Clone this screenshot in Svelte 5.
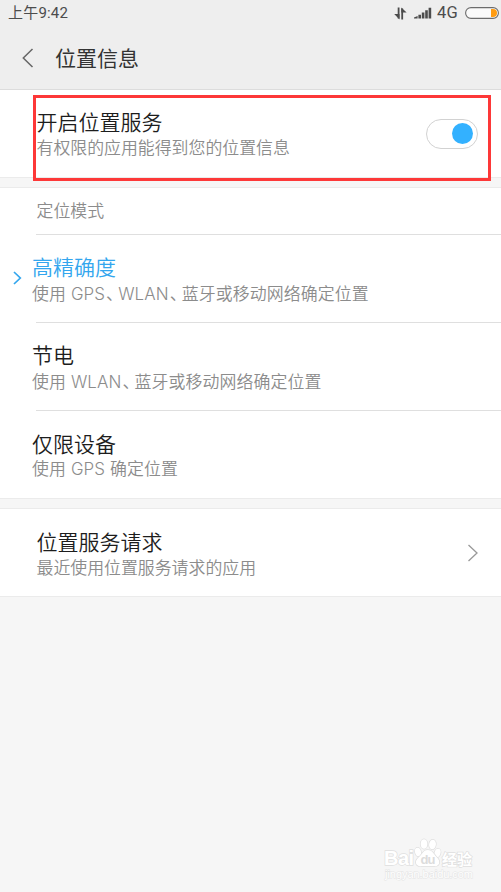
<script lang="ts">
  interface Mode {
    id: string;
    title: string;
    description: string[];
  }

  const modes: Mode[] = [
    { id: 'high', title: '高精确度', description: ['使用 GPS', 'WLAN', '蓝牙或移动网络确定位置'] },
    { id: 'saving', title: '节电', description: ['使用 WLAN', '蓝牙或移动网络确定位置'] },
    { id: 'device', title: '仅限设备', description: ['使用 GPS 确定位置'] }
  ];

  let enabled = $state(true);
  let selected = $state('high');
</script>

<div class="screen">
  <header class="header">
    <div class="status-bar">
      <span class="time">上午9:42</span>
      <div class="status-icons">
        <svg class="data-icon" width="14" height="13" viewBox="0 0 14 13">
          <path d="M4.6 0.5V11.5M8.2 12.5V1.5" fill="none" stroke="#4c4c4c" stroke-width="1.8" />
          <path d="M5.5 12.5V7H0.2zM7.3 0.5V5.5H12.6z" fill="#4c4c4c" />
        </svg>
        <svg class="signal-icon" width="18" height="12" viewBox="0 0 18 12">
          <path d="M0 11.5V10.5L3.6 9V11.5zM4.4 7.8H7V11.5H4.4zM7.8 5.6H10.4V11.5H7.8zM11.2 3.2H13.8V11.5H11.2zM14.6 0.8H17.2V11.5H14.6z" fill="#4c4c4c" />
        </svg>
        <span class="network">4G</span>
        <svg class="battery-icon" width="34" height="12" viewBox="0 0 34 12">
          <rect x="0.6" y="0.6" width="32.8" height="10.8" rx="5.4" fill="#fafafa" stroke="#6c6c6c" stroke-width="1.1" />
          <path d="M26 2H28A4 4 0 0 1 28 10H26z" fill="#ff9c12" />
        </svg>
      </div>
    </div>
    <div class="title-bar">
      <button type="button" class="back" aria-label="返回">
        <svg width="12" height="20" viewBox="0 0 12 20">
          <path d="M10.5 1L1.3 10L10.5 19" fill="none" stroke="#666" stroke-width="1.5" />
        </svg>
      </button>
      <h1>位置信息</h1>
    </div>
  </header>

  <!-- Location switch -->
  <section class="card">
    <div class="row service">
      <div class="texts">
        <div class="title">开启位置服务</div>
        <div class="description">有权限的应用能得到您的位置信息</div>
      </div>
      <button
        type="button"
        class="switch"
        class:on={enabled}
        role="switch"
        aria-checked={enabled}
        aria-label="开启位置服务"
        onclick={() => (enabled = !enabled)}
      >
        <span class="knob"></span>
      </button>
    </div>
    <div class="highlight"></div>
  </section>

  <!-- Location mode -->
  <section class="card">
    <div class="group-label">定位模式</div>
    {#each modes as mode (mode.id)}
      <button
        type="button"
        class="row mode"
        class:selected={selected === mode.id}
        onclick={() => (selected = mode.id)}
      >
        <span class="marker">
          {#if selected === mode.id}
            <svg width="9" height="14" viewBox="0 0 9 14">
              <path d="M1 1L7.3 7L1 13" fill="none" stroke="#33a6ee" stroke-width="1.7" />
            </svg>
          {/if}
        </span>
        <span class="texts">
          <span class="title">{mode.title}</span>
          <span class="description">
            {#each mode.description as part, i}{#if i > 0}<span class="comma">、</span>{/if}{part}{/each}
          </span>
        </span>
      </button>
    {/each}
  </section>

  <section class="card">
    <div class="row requests">
      <div class="texts">
        <div class="title">位置服务请求</div>
        <div class="description">最近使用位置服务请求的应用</div>
      </div>
      <svg width="12" height="18" viewBox="0 0 12 18">
        <path d="M1.5 1L10 9L1.5 17" fill="none" stroke="#999" stroke-width="1.3" />
      </svg>
    </div>
  </section>

  <svg class="watermark" width="94" height="46" viewBox="0 0 94 46">
    <g fill="#fff" stroke="#dfdfdf" stroke-width="1.4" paint-order="stroke">
      <text class="brand" x="1" y="28" textLength="30">Bai</text>
      <ellipse cx="35" cy="15" rx="3" ry="4.3" transform="rotate(-12 35 15)" />
      <ellipse cx="41" cy="7" rx="3.4" ry="4.8" />
      <ellipse cx="49.5" cy="7.5" rx="3.4" ry="4.8" transform="rotate(8 49.5 7.5)" />
      <ellipse cx="54.5" cy="16" rx="3" ry="4.3" transform="rotate(16 54.5 16)" />
      <path d="M44.5 13C50 13 51 18 54.5 21C58 25 56 30 51 29H39C33 30 31 25 35 21C39 18 40 13 44.5 13z" />
      <text class="cjk" x="59" y="28" textLength="30">经验</text>
    </g>
    <text class="du" x="37.5" y="27" textLength="15">du</text>
    <text class="url" x="2" y="41" textLength="88">jingyan.baidu.com</text>
  </svg>
</div>

<style>
  :global(body) {
    background: #f6f6f6;
  }

  .screen {
    position: relative;
    height: 892px;
    overflow: hidden;
    background: #f6f6f6;
    font-family: Roboto, 'Noto Sans CJK SC', sans-serif;
    font-weight: 350;
    color: #1d1d1d;
  }

  button {
    padding: 0;
    border: none;
    background: none;
    font: inherit;
    color: inherit;
    text-align: left;
    cursor: pointer;
  }

  svg {
    display: block;
    flex-shrink: 0;
  }

  /* Header */
  .header {
    box-sizing: border-box;
    height: 90px;
    background: #eee;
    border-bottom: 1px solid #dcdcdc;
  }

  .status-bar {
    display: flex;
    justify-content: space-between;
    height: 26px;
    padding: 0 2px 0 8px;
    font-size: 15px;
    line-height: 26px;
    font-weight: 400;
    color: #4c4c4c;
  }

  .time {
    letter-spacing: 0.2px;
  }

  .status-icons {
    display: flex;
    align-items: center;
  }

  .signal-icon {
    margin-left: 6px;
  }

  .network {
    margin: 0 7px 0 5px;
    font-size: 16.5px;
    letter-spacing: 0.3px;
  }

  .title-bar {
    display: flex;
    align-items: center;
    height: 63px;
    padding-left: 22px;
  }

  h1 {
    margin: 2px 0 0 21px;
    font-size: 21px;
    line-height: 30px;
    font-weight: 400;
    color: #333;
  }

  /* Cards */
  .card {
    position: relative;
    background: #fff;
    border-bottom: 1px solid #ebebeb;
  }

  .card + .card {
    margin-top: 9px;
    border-top: 1px solid #ebebeb;
  }

  .row {
    display: flex;
    align-items: center;
    box-sizing: border-box;
    width: 100%;
    height: 87px;
  }

  .texts {
    display: flex;
    flex: 1;
    flex-direction: column;
    padding-top: 2px;
  }

  .title {
    font-size: 21px;
    line-height: 28px;
  }

  .description {
    font-family: Inter, 'Noto Sans CJK SC', sans-serif;
    font-size: 16.9px;
    line-height: 23px;
    color: #8c8c8c;
    white-space: nowrap;
  }

  .comma {
    margin: 0 3.5px 0 1px;
    font-family: 'Noto Sans CJK SC', sans-serif;
    font-feature-settings: 'halt';
  }

  .service,
  .requests {
    padding: 0 22px 0 36.5px;
  }

  .service {
    padding-right: 23px;
  }

  .requests .texts {
    padding-top: 3px;
  }

  .switch {
    display: flex;
    align-items: center;
    box-sizing: border-box;
    width: 52px;
    height: 30px;
    padding: 0 4px 1px;
    border: 1px solid #d2d2d2;
    border-radius: 15px;
    background: #fff;
  }

  .switch.on {
    justify-content: flex-end;
  }

  .knob {
    width: 21px;
    height: 21px;
    border-radius: 50%;
    background: #b5b5b5;
  }

  .switch.on .knob {
    background: #33b1ff;
  }

  .highlight {
    position: absolute;
    z-index: 1;
    top: 5px;
    left: 33px;
    box-sizing: border-box;
    width: 458px;
    height: 86px;
    border: 3px solid #fd3838;
    pointer-events: none;
  }

  /* Mode list */
  .group-label {
    height: 46px;
    padding-left: 36.5px;
    font-size: 16.9px;
    line-height: 47px;
    color: #8c8c8c;
  }

  .mode {
    height: 88px;
    background: linear-gradient(#dfdfdf, #dfdfdf) 36px 0 / 100% 1px no-repeat;
  }

  .mode .texts {
    padding-top: 4px;
  }

  .mode .title {
    line-height: 26px;
  }

  .mode .description {
    letter-spacing: 0.12px;
  }

  .marker {
    width: 20px;
    margin-right: -1px;
    padding-left: 13px;
  }

  .mode.selected .title {
    color: #33a6ee;
  }

  /* Watermark */
  .watermark {
    position: absolute;
    left: 383px;
    top: 837px;
    font-family: 'Liberation Sans', sans-serif;
  }

  .brand {
    font-size: 20px;
    font-weight: 700;
  }

  .cjk {
    font-family: 'Noto Sans CJK SC', sans-serif;
    font-size: 15px;
    font-weight: 700;
  }

  .du {
    font-size: 13px;
    font-weight: 700;
    fill: #dcdcdc;
  }

  .url {
    font-size: 11px;
    fill: #fff;
    stroke: #e4e4e4;
    stroke-width: 1px;
    paint-order: stroke;
  }
</style>
